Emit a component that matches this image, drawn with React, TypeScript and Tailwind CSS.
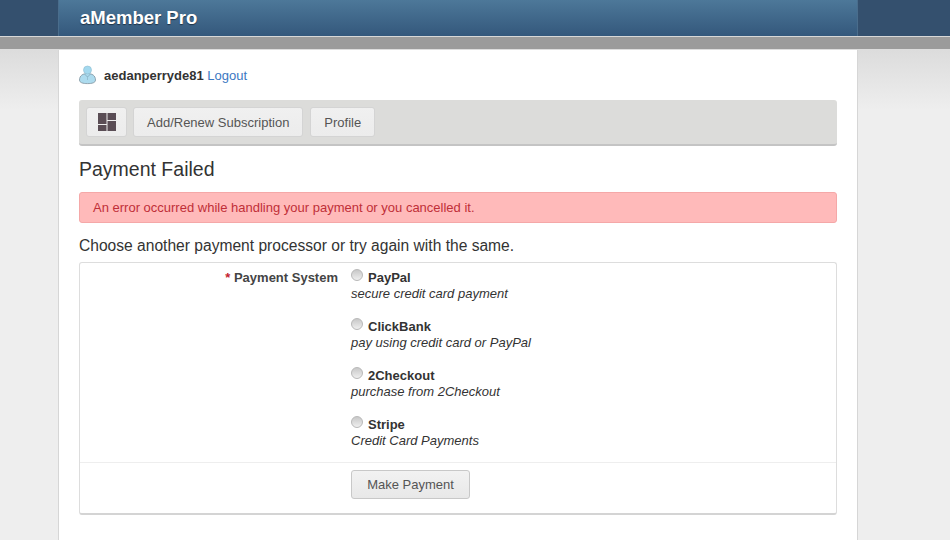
import React from "react";

const processors = [
  { name: "PayPal", desc: "secure credit card payment" },
  { name: "ClickBank", desc: "pay using credit card or PayPal" },
  { name: "2Checkout", desc: "purchase from 2Checkout" },
  { name: "Stripe", desc: "Credit Card Payments" },
];

function UserIcon() {
  return (
    <svg width="17" height="20" viewBox="0 0 17 20" className="shrink-0">
      <path d="M0.5 15 C0.5 10.5 4 8.5 8.5 8.5 C13 8.5 16.5 10.5 16.5 15 C16.5 17.8 13 18.6 8.5 18.6 C4 18.6 0.5 17.8 0.5 15 Z" fill="#addbee" stroke="#7f939e" strokeWidth="0.8" />
      <circle cx="8.5" cy="5" r="4" fill="#a3d9ef" stroke="#8fbdd0" strokeWidth="0.6" />
      <path d="M5.5 9 L8.5 12 L11.5 9" stroke="#7fa8bc" strokeWidth="0.8" fill="none" />
      <path d="M8.5 12 L8.5 15" stroke="#8fb9cc" strokeWidth="0.8" />
    </svg>
  );
}

function DashIcon() {
  return (
    <svg width="18" height="18" viewBox="0 0 18 18">
      <rect x="0" y="0" width="8.5" height="11" fill="#5a4d55" />
      <rect x="9.5" y="0" width="8.5" height="7" fill="#5a4d55" />
      <rect x="0" y="12" width="8.5" height="6" fill="#5a4d55" />
      <rect x="9.5" y="8" width="8.5" height="10" fill="#5a4d55" />
    </svg>
  );
}

function MenuButton({ children, icon }: { children: React.ReactNode; icon?: boolean }) {
  return (
    <a className={`h-[30px] ${icon ? "w-[41px] justify-center" : "px-[13px] pt-[1px]"} flex items-center rounded-[3px] border border-[#d4d4d4] bg-gradient-to-b from-[#f0f0f0] to-[#ececec] text-[13px] text-[#555555]`}>
      {children}
    </a>
  );
}

export default function App() {
  return (
    <div className="h-[540px] w-[950px] overflow-hidden bg-[#eeeeee] font-['Liberation_Sans',Arial,sans-serif]">
      <div className="h-[36px] bg-[#34506e] flex pl-[58px]">
        <div className="w-[800px] bg-gradient-to-b from-[#4d7899] to-[#34587c] border-x border-[#4a6d8c] flex items-center pl-[21px]">
          <span className="text-[18.5px] font-bold text-white [text-shadow:0_1px_1px_#1f3347]">aMember Pro</span>
        </div>
      </div>
      <div className="h-[14px] bg-[#9b9b9b] border-t border-b border-t-[#d8d8d8] border-b-[#dddddd]" />
      <div className="h-[490px] bg-gradient-to-b from-[#dcdcdc] to-[#eeeeee] bg-[length:100%_60px] bg-no-repeat flex pl-[58px]">
        <div className="w-[800px] h-full bg-white border-x border-[#d6d6d6] px-[20px] text-[#333333]">
          <div className="h-[50px] flex items-center gap-[8px]">
            <UserIcon />
            <div className="text-[13px] pt-[1px]">
              <strong className="text-[#333333]">aedanperryde81</strong>{" "}
              <a className="text-[#3b78c2]">Logout</a>
            </div>
          </div>
          <div className="h-[46px] rounded-[3px] bg-[#dcdcda] border-b-2 border-[#c4c4c4] px-[7px] pt-[7px] flex gap-[6px]">
            <MenuButton icon>
              <DashIcon />
            </MenuButton>
            <MenuButton>Add/Renew Subscription</MenuButton>
            <div className="ml-px">
              <MenuButton>Profile</MenuButton>
            </div>
          </div>
          <h1 className="mt-[11px] h-[24px] leading-[24px] text-[19.5px] text-[#333333]">Payment Failed</h1>
          <div className="mt-[11px] h-[31px] flex items-center rounded-[3px] bg-[#ffbaba] border border-[#f5a8a8] pl-[13px] text-[13px] text-[#bf2f38]">
            An error occurred while handling your payment or you cancelled it.
          </div>
          <p className="mt-[14px] h-[18px] leading-[18px] text-[15.6px] text-[#333333]">
            Choose another payment processor or try again with the same.
          </p>
          <form className="mt-[7px] h-[253px] rounded-[3px] border border-[#dddddd] border-b-2 border-b-[#d4d4d4] bg-white">
            <div className="h-[200px] border-b border-[#eeeeee] flex">
              <label className="w-[258px] shrink-0 pt-[7px] text-right text-[13px] leading-[15px] font-bold text-[#444444]">
                <span className="text-[#c4232f]">*</span> Payment System
              </label>
              <div className="ml-[13px] pt-[6px] flex flex-col gap-[19px]">
                {processors.map((p) => (
                  <div key={p.name} className="h-[30px]">
                    <div className="flex h-[17px]">
                      <span className="w-[12px] h-[12px] rounded-full border border-[#b8b8b8] bg-gradient-to-b from-[#c8c8c8] to-[#efefef]" />
                      <span className="ml-[5px] mt-px text-[13px] leading-[15px] font-bold text-[#333333]">{p.name}</span>
                    </div>
                    <div className="text-[13px] leading-[16px] italic text-[#333333]">{p.desc}</div>
                  </div>
                ))}
              </div>
            </div>
            <div className="pl-[271px] pt-[7px]">
              <button type="button" className="w-[119px] h-[29px] rounded-[3px] border border-[#c8c8c8] bg-gradient-to-b from-[#f2f2f2] to-[#e8e8e8] text-[13px] text-[#555555]">
                Make Payment
              </button>
            </div>
          </form>
        </div>
      </div>
    </div>
  );
}
